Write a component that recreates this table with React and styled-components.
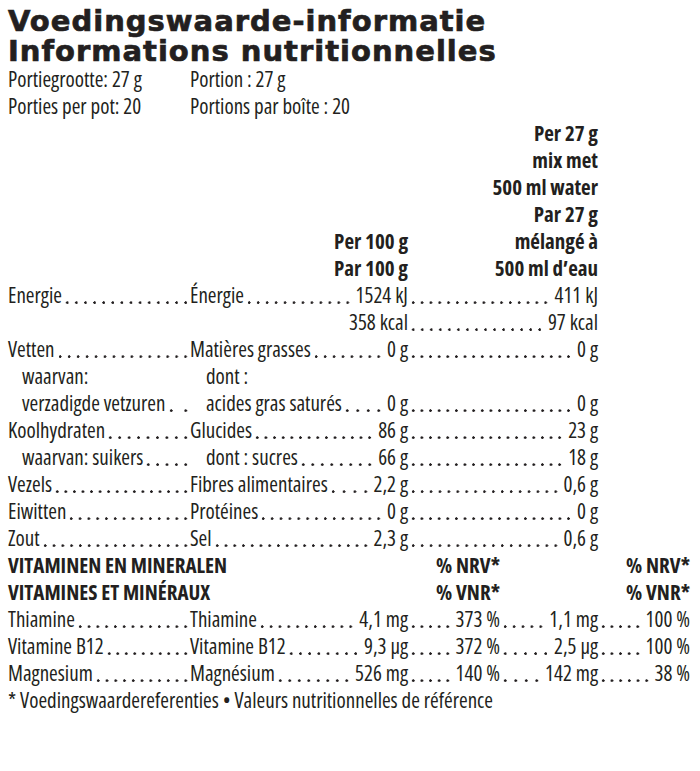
import React from 'react';
import styled, { createGlobalStyle } from 'styled-components';

const GlobalStyle = createGlobalStyle`
  body {
    margin: 0;
    background: #ffffff;
  }
`;

const ink = '#231f20';

const Label = styled.div`
  width: 700px;
  padding: 6px 0 0 8px;
  box-sizing: border-box;
  color: ${ink};
  font-family: "Open Sans", "Liberation Sans", sans-serif;
  font-stretch: condensed;
  font-size: 21px;
  line-height: 27px;
`;

const Title = styled.h1`
  margin: 0;
  font-family: "DejaVu Sans", "Liberation Sans", sans-serif;
  font-stretch: normal;
  font-weight: 700;
  font-size: 29px;
  line-height: 30px;
  letter-spacing: 1px;
  white-space: nowrap;
  -webkit-text-stroke: 0.7px ${ink};
`;

const Grid = styled.div`
  display: grid;
  grid-template-columns: 182px 218px 92px 98px 92px;
`;

const Cell = styled.div`
  display: flex;
  align-items: baseline;
  white-space: nowrap;
  min-width: 0;
  grid-column: ${p => p.$col || 'auto'};
  padding-left: ${p => p.$indent || 0}px;
  justify-content: ${p => (p.$right ? 'flex-end' : 'flex-start')};
  font-weight: ${p => (p.$bold ? 700 : 400)};
`;

const Stack = styled.div`
  display: flex;
  flex-direction: column;
  align-items: flex-end;
  justify-content: flex-end;
  grid-column: ${p => p.$col};
  font-weight: 700;
`;

// dot leader, drawn as evenly spaced dots on the baseline
const Leader = styled.span`
  flex: 1 1 auto;
  align-self: stretch;
  min-width: 8px;
  margin: 0 ${p => (p.$tight ? 0 : 4)}px 0 1px;
  background-image: radial-gradient(circle at 50% 20.6px, ${ink} 1.05px, transparent 1.55px);
  background-size: 8.5px 100%;
  background-repeat: space no-repeat;
`;

const Footnote = styled.div`
  grid-column: 1 / -1;
`;

const nutrients = [
  { nl: 'Energie', fr: 'Énergie', v100: '1524 kJ', v27: '411 kJ' },
  { v100: '358 kcal', v27: '97 kcal' },
  { nl: 'Vetten', fr: 'Matières grasses', v100: '0 g', v27: '0 g' },
  { nl: 'waarvan:', fr: 'dont :', sub: true, plain: true },
  { nl: 'verzadigde vetzuren', fr: 'acides gras saturés', v100: '0 g', v27: '0 g', sub: true },
  { nl: 'Koolhydraten', fr: 'Glucides', v100: '86 g', v27: '23 g' },
  { nl: 'waarvan: suikers', fr: 'dont : sucres', v100: '66 g', v27: '18 g', sub: true },
  { nl: 'Vezels', fr: 'Fibres alimentaires', v100: '2,2 g', v27: '0,6 g' },
  { nl: 'Eiwitten', fr: 'Protéines', v100: '0 g', v27: '0 g' },
  { nl: 'Zout', fr: 'Sel', v100: '2,3 g', v27: '0,6 g' },
];

const vitamins = [
  { nl: 'Thiamine', fr: 'Thiamine', v100: '4,1 mg', nrv100: '373 %', v27: '1,1 mg', nrv27: '100 %' },
  { nl: 'Vitamine B12', fr: 'Vitamine B12', v100: '9,3 µg', nrv100: '372 %', v27: '2,5 µg', nrv27: '100 %' },
  { nl: 'Magnesium', fr: 'Magnésium', v100: '526 mg', nrv100: '140 %', v27: '142 mg', nrv27: '38 %' },
];

const NutrientRow = ({ item }) => {
  const { nl, fr, v100, v27, sub, plain } = item;
  return (
    <>
      <Cell $indent={sub ? 14 : 0}>
        {nl}
        {nl && !plain && <Leader $tight />}
      </Cell>
      <Cell $indent={sub ? 16 : 0} $right={!fr}>
        {fr}
        {fr && v100 && <Leader />}
        {v100}
      </Cell>
      <Cell $col="3 / 5" $right>
        {v27 && <Leader />}
        {v27}
      </Cell>
      <Cell />
    </>
  );
};

const VitaminRow = ({ item }) => (
  <>
    <Cell>
      {item.nl}
      <Leader $tight />
    </Cell>
    <Cell>
      {item.fr}
      <Leader />
      {item.v100}
    </Cell>
    <Cell $right>
      <Leader />
      {item.nrv100}
    </Cell>
    <Cell $right>
      <Leader />
      {item.v27}
    </Cell>
    <Cell $right>
      <Leader />
      {item.nrv27}
    </Cell>
  </>
);

export default function App() {
  return (
    <>
      <GlobalStyle />
      <Label>
        <Title>
          Voedingswaarde-informatie
          <br />
          Informations nutritionnelles
        </Title>
        <Grid>
          <Cell>Portiegrootte: 27 g</Cell>
          <Cell $col="2 / -1">Portion : 27 g</Cell>
          <Cell>Porties per pot: 20</Cell>
          <Cell $col="2 / -1">Portions par boîte : 20</Cell>

          <Stack $col="2">
            <span>Per 100 g</span>
            <span>Par 100 g</span>
          </Stack>
          <Stack $col="3 / 5">
            <span>Per 27 g</span>
            <span>mix met</span>
            <span>500 ml water</span>
            <span>Par 27 g</span>
            <span>mélangé à</span>
            <span>500 ml d’eau</span>
          </Stack>
          <Cell />

          {nutrients.map((item, i) => (
            <NutrientRow key={i} item={item} />
          ))}

          <Cell $col="1 / 3" $bold>VITAMINEN EN MINERALEN</Cell>
          <Cell $right $bold>% NRV*</Cell>
          <Cell />
          <Cell $right $bold>% NRV*</Cell>
          <Cell $col="1 / 3" $bold>VITAMINES ET MINÉRAUX</Cell>
          <Cell $right $bold>% VNR*</Cell>
          <Cell />
          <Cell $right $bold>% VNR*</Cell>

          {vitamins.map(item => (
            <VitaminRow key={item.nl} item={item} />
          ))}

          <Footnote>* Voedingswaardereferenties • Valeurs nutritionnelles de référence</Footnote>
        </Grid>
      </Label>
    </>
  );
}
